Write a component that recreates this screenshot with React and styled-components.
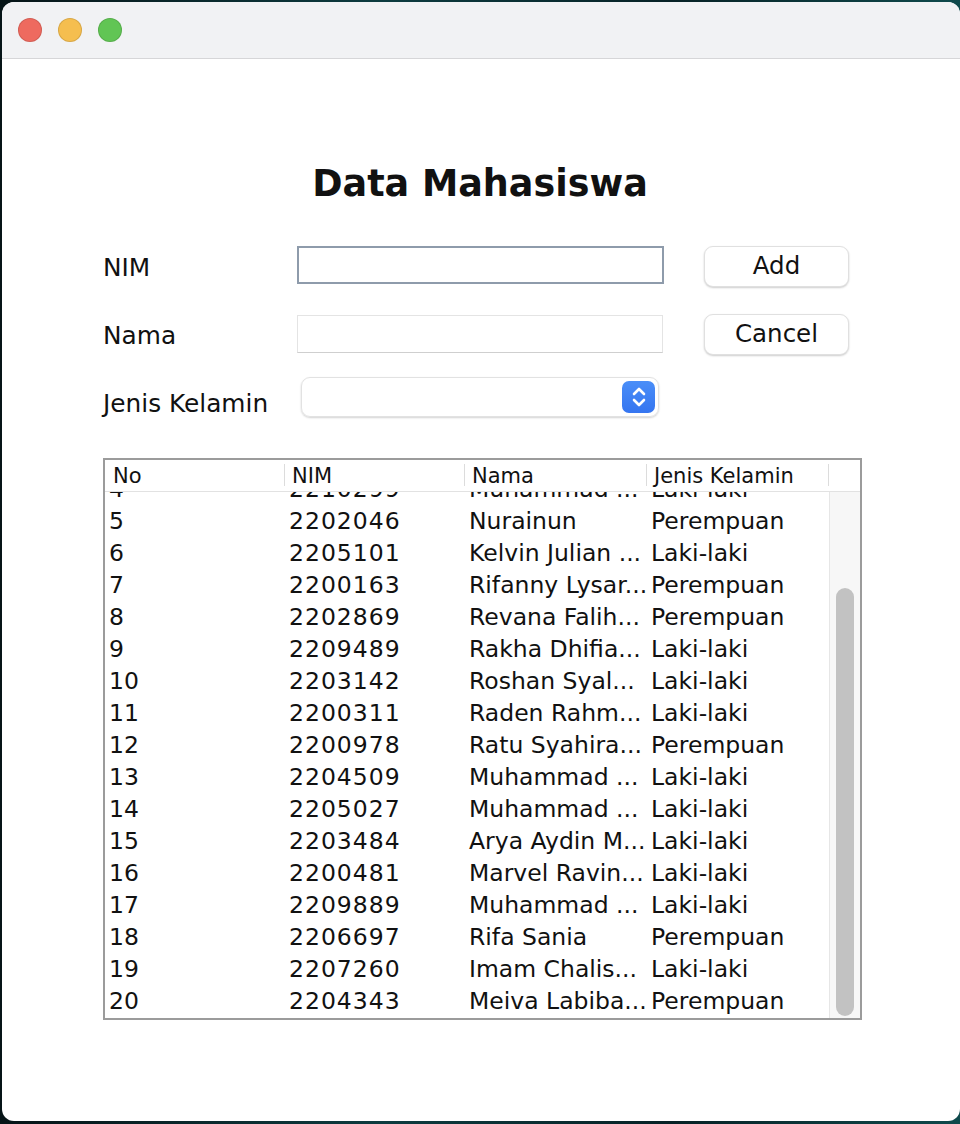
import React from 'react';
import styled, { createGlobalStyle } from 'styled-components';

const Global = createGlobalStyle`
  html, body { margin: 0; padding: 0; }
  body {
    background: linear-gradient(90deg, #061417 0%, #0d3c40 40%, #072226 70%, #0f4a4c 100%);
    font-family: "DejaVu Sans", "Liberation Sans", sans-serif;
    color: #111;
  }
`;

const Window = styled.div`
  margin: 2px 0 3px 2px;
  height: 1119px;
  background: #fff;
  border-radius: 12px;
  overflow: hidden;
  display: flex;
  flex-direction: column;
`;

const TitleBar = styled.div`
  height: 56px;
  flex-shrink: 0;
  background: #f1f2f4;
  border-bottom: 1px solid #d6d6d8;
  display: flex;
  align-items: center;
  gap: 16px;
  padding-left: 16px;
`;

const Light = styled.span`
  width: 24px;
  height: 24px;
  border-radius: 50%;
  background: ${p => p.$c};
  box-shadow: inset 0 0 0 1px rgba(0,0,0,0.12);
`;

const Content = styled.div`
  display: flex;
  flex-direction: column;
  padding: 99px 0 0 101px;
`;

const Title = styled.h1`
  margin: 0 0 38px 0;
  width: 754px;
  text-align: center;
  font-size: 36.5px;
  font-weight: bold;
  line-height: 52px;
`;

const Form = styled.div`
  display: grid;
  grid-template-columns: 194px 370px 37px 146px;
  grid-auto-rows: 68px;
  align-items: start;
  width: 760px;
  margin-top: -2px;
`;

const Label = styled.div`
  font-size: 24.8px;
  line-height: 40px;
  margin-top: 2px;
`;

const Field = styled.div`
  height: 38px;
  box-sizing: border-box;
  background: #fff;
  border: ${p => p.$focus ? '2px solid #8e9bab' : '1px solid #e4e4e4'};
  border-bottom-color: ${p => p.$focus ? '#8e9bab' : '#cfcfcf'};
  margin-top: ${p => p.$focus ? '0' : '1px'};
  width: ${p => p.$focus ? '367px' : '366px'};
`;

const Combo = styled.div`
  grid-column: 2 / span 1;
  margin-left: 4px;
  margin-top: -5px;
  width: 358px;
  height: 40px;
  box-sizing: border-box;
  border: 1px solid #e2e2e2;
  border-radius: 9px;
  box-shadow: 0 1px 2px rgba(0,0,0,0.18);
  display: flex;
  justify-content: flex-end;
  align-items: center;
  padding-right: 3px;
`;

const Stepper = styled.div`
  width: 33px;
  height: 32px;
  border-radius: 7px;
  background: linear-gradient(#4a8ef8, #3575f0);
  display: flex;
  align-items: center;
  justify-content: center;
`;

const Button = styled.button`
  grid-column: 4;
  width: 145px;
  height: 41px;
  margin-top: 0;
  background: #fff;
  border: 1px solid #e0e0e0;
  border-radius: 9px;
  box-shadow: 0 1px 2px rgba(0,0,0,0.2);
  font-family: inherit;
  font-size: 24.5px;
  color: #111;
  padding: 0 0 3px 0;
`;

const TableBox = styled.div`
  margin-top: 8px;
  width: 759px;
  height: 562px;
  box-sizing: border-box;
  border: 2px solid #9b9b9b;
  display: flex;
  flex-direction: column;
  overflow: hidden;
`;

const HeadRow = styled.div`
  display: flex;
  height: 32px;
  flex-shrink: 0;
  position: relative;
  z-index: 1;
  background: #fff;
`;

const HeadCell = styled.div`
  width: ${p => p.$w}px;
  flex-shrink: 0;
  box-sizing: border-box;
  font-size: 21px;
  line-height: 32px;
  padding-left: ${p => p.$first ? '8px' : '7px'};
  position: relative;
  border-bottom: 1px solid #e2e2e2;
  &::before {
    content: '';
    display: ${p => p.$first ? 'none' : 'block'};
    position: absolute;
    left: -1px;
    top: 4px;
    height: 22px;
    width: 1px;
    background: #dcdcdc;
  }
`;

const Body = styled.div`
  flex: 1;
  display: flex;
  min-height: 0;
`;

const Viewport = styled.div`
  width: 724px;
  overflow: hidden;
`;

const Rows = styled.div`
  margin-top: -19px;
`;

const Row = styled.div`
  display: flex;
  height: 32px;
  align-items: center;
`;

const Cell = styled.div`
  width: ${p => p.$w}px;
  flex-shrink: 0;
  box-sizing: border-box;
  padding-left: 4px;
  font-size: 23.5px;
  letter-spacing: ${p => p.$digits ? '1px' : '0'};
  white-space: nowrap;
  overflow: hidden;
`;

const Track = styled.div`
  flex: 1;
  background: #f7f7f7;
  border-left: 1px solid #e6e6e6;
  padding: 96px 6px 2px 6px;
  display: flex;
`;

const Thumb = styled.div`
  flex: 1;
  background: #c2c2c2;
  border-radius: 9px;
`;

const cols = [180, 180, 182, 182];

const data = [
  ['4', '2210299', 'Muhammad ...', 'Laki-laki'],
  ['5', '2202046', 'Nurainun', 'Perempuan'],
  ['6', '2205101', 'Kelvin Julian ...', 'Laki-laki'],
  ['7', '2200163', 'Rifanny Lysar...', 'Perempuan'],
  ['8', '2202869', 'Revana Falih...', 'Perempuan'],
  ['9', '2209489', 'Rakha Dhifia...', 'Laki-laki'],
  ['10', '2203142', 'Roshan Syal...', 'Laki-laki'],
  ['11', '2200311', 'Raden Rahm...', 'Laki-laki'],
  ['12', '2200978', 'Ratu Syahira...', 'Perempuan'],
  ['13', '2204509', 'Muhammad ...', 'Laki-laki'],
  ['14', '2205027', 'Muhammad ...', 'Laki-laki'],
  ['15', '2203484', 'Arya Aydin M...', 'Laki-laki'],
  ['16', '2200481', 'Marvel Ravin...', 'Laki-laki'],
  ['17', '2209889', 'Muhammad ...', 'Laki-laki'],
  ['18', '2206697', 'Rifa Sania', 'Perempuan'],
  ['19', '2207260', 'Imam Chalis...', 'Laki-laki'],
  ['20', '2204343', 'Meiva Labiba...', 'Perempuan'],
];

function Chevrons() {
  return (
    <svg width="16" height="22" viewBox="0 0 16 22" fill="none" stroke="#fff" strokeWidth="2.6" strokeLinecap="round" strokeLinejoin="round">
      <path d="M3 8 L8 3 L13 8" />
      <path d="M3 14 L8 19 L13 14" />
    </svg>
  );
}

export default function App() {
  return (
    <>
      <Global />
      <Window>
        <TitleBar>
          <Light $c="#ee6a5f" />
          <Light $c="#f5be4f" />
          <Light $c="#61c554" />
        </TitleBar>
        <Content>
          <Title>Data Mahasiswa</Title>
          <Form>
            <Label>NIM</Label>
            <Field $focus />
            <span />
            <Button>Add</Button>

            <Label>Nama</Label>
            <Field />
            <span />
            <Button>Cancel</Button>

            <Label>Jenis Kelamin</Label>
            <Combo>
              <Stepper><Chevrons /></Stepper>
            </Combo>
          </Form>

          <TableBox>
            <HeadRow>
              <HeadCell $w={180} $first>No</HeadCell>
              <HeadCell $w={180}>NIM</HeadCell>
              <HeadCell $w={182}>Nama</HeadCell>
              <HeadCell $w={182}>Jenis Kelamin</HeadCell>
              <HeadCell $w={31} />
            </HeadRow>
            <Body>
              <Viewport>
                <Rows>
                  {data.map(r => (
                    <Row key={r[0]}>
                      {r.map((v, i) => (
                        <Cell key={i} $w={cols[i]} $digits={i === 1}>{v}</Cell>
                      ))}
                    </Row>
                  ))}
                </Rows>
              </Viewport>
              <Track><Thumb /></Track>
            </Body>
          </TableBox>
        </Content>
      </Window>
    </>
  );
}
